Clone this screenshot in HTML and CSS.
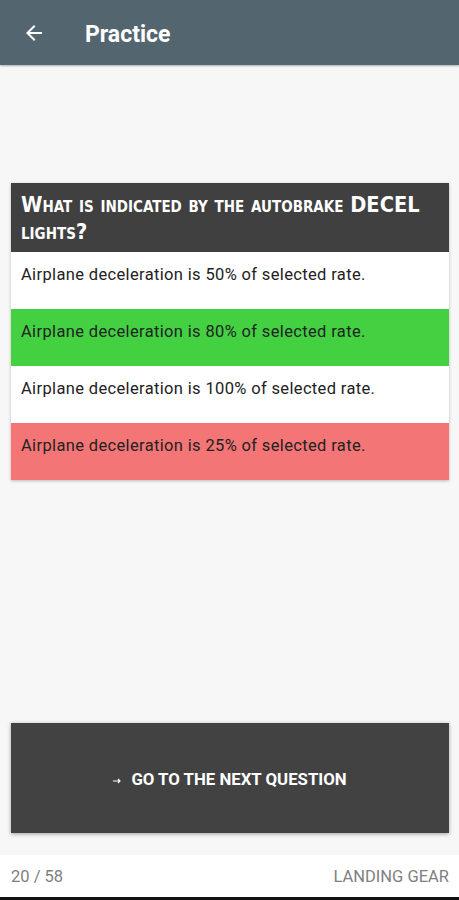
FILE: index.html
```html
<!DOCTYPE html>
<html lang="en">

<head>
    <meta charset="UTF-8">
    <meta name="viewport" content="width=device-width, initial-scale=1.0">
    <title>Practice</title>
    <link rel="stylesheet" href="styles.css">
</head>

<body>
    <div class="app">
        <header class="toolbar">
            <svg class="toolbar__back" width="24" height="24" viewBox="0 0 24 24">
                <path d="M20 11H7.83l5.59-5.59L12 4l-8 8 8 8 1.41-1.41L7.83 13H20v-2z" fill="#ffffff" />
            </svg>
            <h1 class="toolbar__title">Practice</h1>
        </header>

        <main class="content">
            <div class="question">
                <h2 class="question__title">What is indicated by the autobrake DECEL lights?</h2>
                <div class="answer">Airplane deceleration is 50% of selected rate.</div>
                <div class="answer answer--correct">Airplane deceleration is 80% of selected rate.</div>
                <div class="answer">Airplane deceleration is 100% of selected rate.</div>
                <div class="answer answer--wrong">Airplane deceleration is 25% of selected rate.</div>
            </div>

            <button class="next-btn">
                <svg class="next-btn__icon" width="10" height="6" viewBox="0 0 10 6">
                    <path d="M0 3h7M5 1l2 2-2 2" stroke="#ffffff" stroke-width="1.2" fill="none" />
                </svg>
                Go to the next question
            </button>
        </main>

        <footer class="status">
            <span>20 / 58</span>
            <span>LANDING GEAR</span>
        </footer>
    </div>
</body>

</html>
```
FILE: styles.css
```css
html,
body {
    margin: 0;
    height: 100%;
}

body {
    font-family: Roboto, "Liberation Sans", sans-serif;
    background: #f7f7f7;
}

.app {
    display: flex;
    flex-direction: column;
    height: 900px;
}

.toolbar {
    height: 65px;
    background: #536670;
    display: flex;
    align-items: center;
    padding: 3px 0 0 22px;
    box-shadow: 0 1px 2px rgb(0 0 0 / 30%);
    box-sizing: border-box;
    flex-shrink: 0;
}

.toolbar__back {
    width: 24px;
    height: 24px;
    margin-top: -3px;
}

.toolbar__title {
    margin: 0 0 0 39px;
    color: #ffffff;
    font-size: 23px;
    font-weight: 700;
}

.content {
    flex: 1;
    display: flex;
    flex-direction: column;
    padding: 118px 10px 22px 11px;
}

.question {
    background: #ffffff;
    box-shadow: 0 1px 3px rgb(0 0 0 / 25%);
}

.question__title {
    margin: 0;
    background: #404040;
    color: #ffffff;
    font-family: "DejaVu Sans Condensed", "DejaVu Sans", sans-serif;
    font-variant: small-caps;
    font-weight: 600;
    font-size: 21.6px;
    line-height: 27px;
    padding: 8px 10px 8px 10px;
    height: 69px;
    box-sizing: border-box;
}

.answer {
    height: 57px;
    box-sizing: border-box;
    padding: 13px 10px 0;
    font-size: 16.5px;
    letter-spacing: 0.35px;
    color: #222222;
}

.answer--correct {
    background: #43d142;
}

.answer--wrong {
    background: #f47575;
}

.next-btn {
    margin-top: auto;
    height: 110px;
    background: #424242;
    border: none;
    color: #ffffff;
    font-family: Roboto, sans-serif;
    font-weight: 700;
    font-size: 16.8px;
    text-transform: uppercase;
    box-shadow: 0 1px 4px rgb(0 0 0 / 35%);
    display: flex;
    justify-content: center;
    align-items: center;
    gap: 8px;
    padding-top: 3px;
}

.next-btn__icon {
    margin-top: 4px;
}

.status {
    height: 42px;
    background: #ffffff;
    border-bottom: 3px solid #111111;
    display: flex;
    justify-content: space-between;
    align-items: center;
    padding: 0 10px 0 11px;
    color: #808080;
    font-size: 16.5px;
    flex-shrink: 0;
}
```
